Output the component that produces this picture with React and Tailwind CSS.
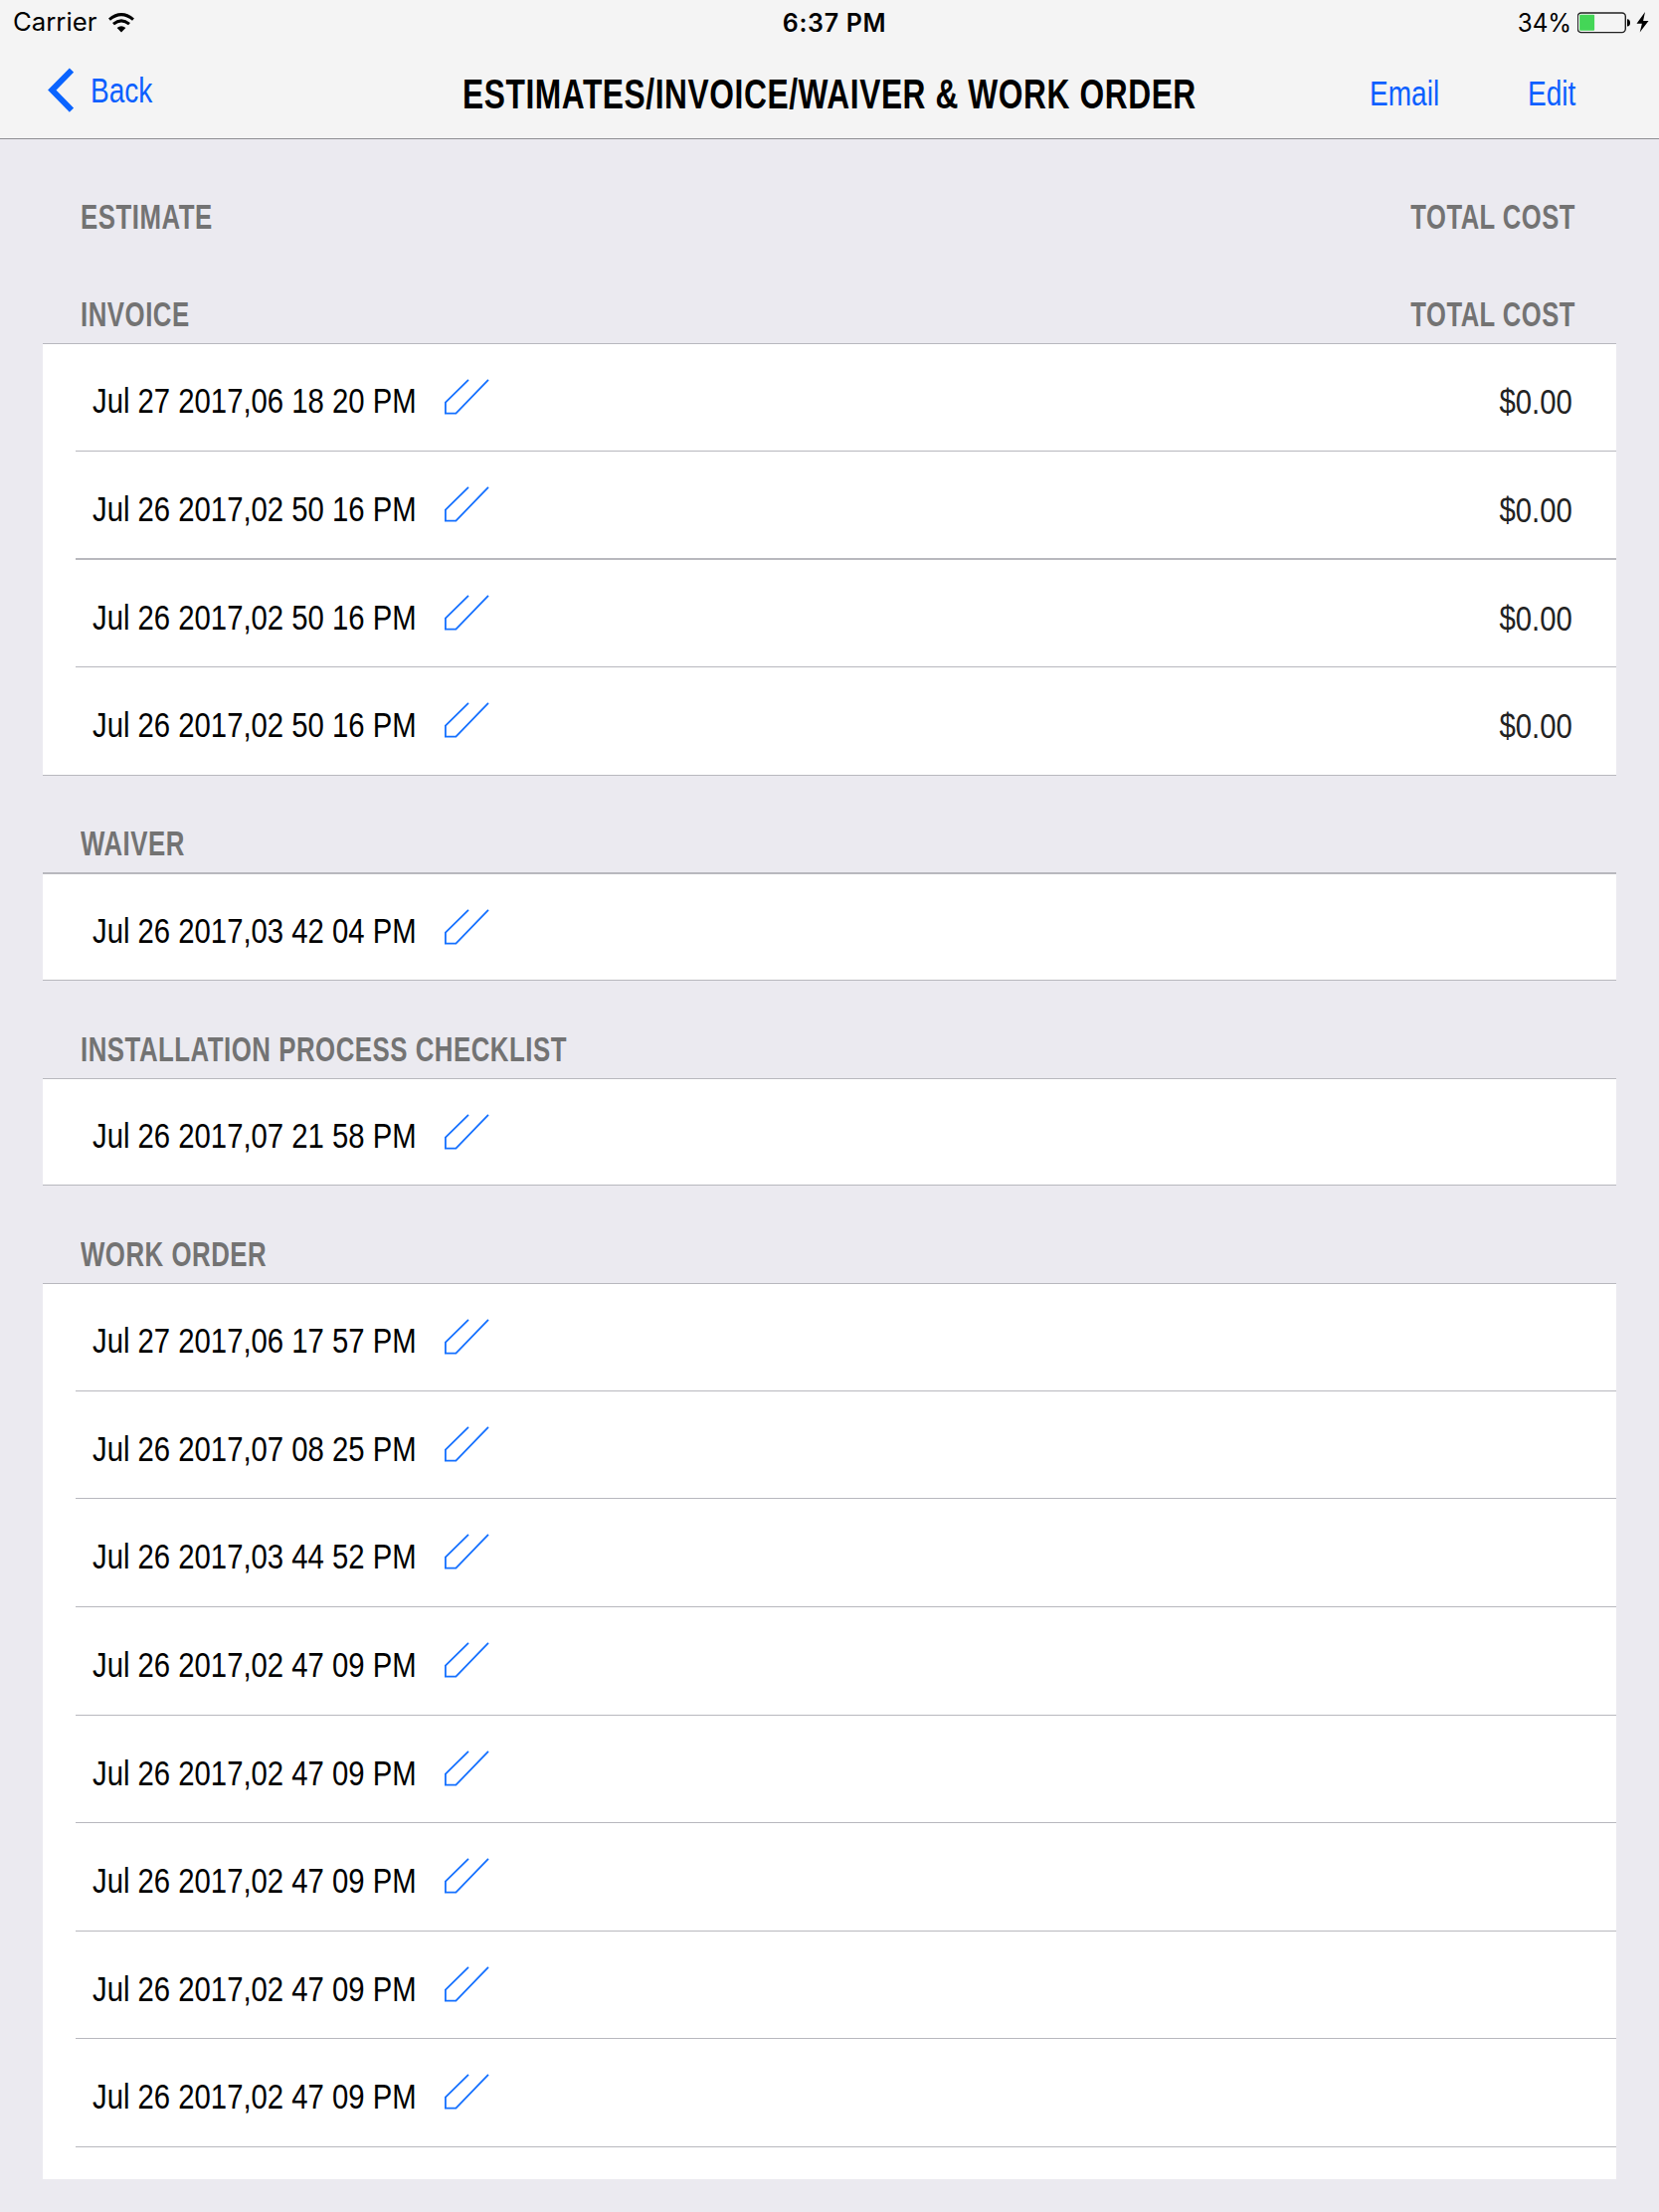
import React from "react";

const invoices = [
  { date: "Jul 27 2017,06 18 20 PM", box: "h-[108px] border-t" },
  { date: "Jul 26 2017,02 50 16 PM", box: "h-[108px] border-t" },
  { date: "Jul 26 2017,02 50 16 PM", box: "h-[109px] border-t-2" },
  { date: "Jul 26 2017,02 50 16 PM", box: "h-[109px] border-t" },
];

const workOrders = [
  { date: "Jul 27 2017,06 17 57 PM", box: "h-[108px] border-t" },
  { date: "Jul 26 2017,07 08 25 PM", box: "h-[108px] border-t" },
  { date: "Jul 26 2017,03 44 52 PM", box: "h-[109px] border-t" },
  { date: "Jul 26 2017,02 47 09 PM", box: "h-[109px] border-t" },
  { date: "Jul 26 2017,02 47 09 PM", box: "h-[108px] border-t" },
  { date: "Jul 26 2017,02 47 09 PM", box: "h-[109px] border-t" },
  { date: "Jul 26 2017,02 47 09 PM", box: "h-[108px] border-t" },
  { date: "Jul 26 2017,02 47 09 PM", box: "h-[109px] border-t" },
];

function Pencil() {
  return (
    <svg className="h-9 w-[46px] shrink-0" viewBox="0 0 46 36" fill="none" stroke="#1470ff" strokeWidth="1.8">
      <path d="M25 .8 1.9 23.6V34.7H12.4L45 .8" />
    </svg>
  );
}

function Row({ date, box, cost, first }) {
  return (
    <div className={first ? "" : "pl-[33px]"}>
      <div className={`border-[#b8b8be] ${box}`}>
        <div className={`flex pt-10 pr-[44px] ${first ? "pl-[50px]" : "pl-[17px]"}`}>
          <span className={`w-[354px] shrink-0 origin-left scale-x-[0.825] text-[35.5px] leading-9 whitespace-nowrap ${first ? "-mt-px" : ""}`}>{date}</span>
          <div className="-ml-px -mt-[5px] h-9">
            <Pencil />
          </div>
          {cost && (
            <span className={`ml-auto origin-right scale-x-[0.825] text-[35.5px] leading-9 text-[#222] ${first ? "" : "mt-px"}`}>{cost}</span>
          )}
        </div>
      </div>
    </div>
  );
}

function Heading({ title, cost, box }) {
  return (
    <div className={`flex items-end justify-between pr-[84px] pb-[11px] pl-[81px] text-[35.5px] leading-[35px] font-bold tracking-[0.7px] text-[#737373] ${box}`}>
      <h2 className="origin-left scale-x-[0.727] whitespace-nowrap">{title}</h2>
      {cost && <span className="origin-right scale-x-[0.72] whitespace-nowrap">TOTAL COST</span>}
    </div>
  );
}

function List({ rows, cost, end }) {
  return (
    <div className={`mx-[43px] bg-white ${end}`}>
      {rows.map((r, i) => (
        <Row key={i} date={r.date} box={r.box} cost={cost} first={i === 0} />
      ))}
    </div>
  );
}

function StatusBar() {
  return (
    <div className="grid h-[45px] grid-cols-3 items-center pr-2.5 pl-[13px] font-[Inter,sans-serif] text-[25px] leading-none">
      <div className="flex items-center">
        <span className="w-[96px] origin-left scale-x-[1.03]">Carrier</span>
        <svg className="h-5 w-[26px]" viewBox="0 0 26 20" fill="none" stroke="#000" strokeWidth="3">
          <path d="M1 6.6Q13-3.4 25 6.6" />
          <path d="M5 11.2Q13 4.6 21 11.2" />
          <path d="M13 19.5 8.6 15Q13 11.4 17.4 15Z" fill="#000" stroke="none" />
        </svg>
      </div>
      <div className="pt-px pl-[7px] text-center font-semibold tracking-[0.65px]">6:37 PM</div>
      <div className="flex items-center justify-end">
        <span className="origin-right scale-x-[0.97] pt-px">34%</span>
        <svg className="ml-1.5 h-[22px] w-[72px]" viewBox="0 0 72 22">
          <rect x=".3" y="1" width="48" height="19.6" rx="3.5" fill="none" stroke="#222" strokeWidth="1.4" />
          <rect x="2.1" y="2.8" width="15" height="16" rx="1" fill="#44d657" />
          <path d="M50 7.2Q53 7.5 53 11T50 14.4Z" fill="#000" />
          <path d="M68 0 59.5 11.7H64.9L62.7 20.5 71.5 9H66.1Z" fill="#000" />
        </svg>
      </div>
    </div>
  );
}

export default function App() {
  return (
    <div className="h-[2224px] w-[1668px] overflow-hidden bg-[#ebeaf0] font-['Liberation_Sans',sans-serif] text-black">
      <header className="h-[140px] border-b border-[#8e8e93] bg-[#f4f4f4]">
        <StatusBar />
        <nav className="flex h-[94px] text-[35.5px] leading-[34px] text-[#0b5fff]">
          <div className="flex w-[465px] shrink-0 pt-[23px] pl-[47px]">
            <svg className="h-[46px] w-[27px]" viewBox="0 0 27 46" fill="none" stroke="#0a64ff" strokeWidth="6">
              <path d="M25 2.5 5.3 22.6 25 42.7" />
            </svg>
            <span className="mt-1.5 ml-[17px] origin-left scale-x-[0.79]">Back</span>
          </div>
          <h1 className="w-[740px] shrink-0 pt-[29px] text-[43px] leading-[41px] font-bold tracking-[0.8px] whitespace-nowrap text-black">
            <span className="block w-[740px] origin-left scale-x-[0.737]">ESTIMATES/INVOICE/WAIVER &amp; WORK ORDER</span>
          </h1>
          <div className="flex flex-1 pt-8 pl-[172px]">
            <span className="w-[159px] shrink-0 origin-left scale-x-[0.79]">Email</span>
            <span className="origin-left scale-x-[0.79]">Edit</span>
          </div>
        </nav>
      </header>

      <main>
        <Heading title="ESTIMATE" cost box="h-[107px]" />
        <Heading title="INVOICE" cost box="h-[98px]" />
        <List rows={invoices} cost="$0.00" end="border-b border-[#b8b8be]" />
        <Heading title="WAIVER" box="h-[97px]" />
        <List rows={[{ date: "Jul 26 2017,03 42 04 PM", box: "h-[108px] border-t-2" }]} end="border-b border-[#b8b8be]" />
        <Heading title="INSTALLATION PROCESS CHECKLIST" box="h-[98px]" />
        <List rows={[{ date: "Jul 26 2017,07 21 58 PM", box: "h-[107px] border-t" }]} end="border-b border-[#b8b8be]" />
        <Heading title="WORK ORDER" box="h-[98px]" />
        <List rows={workOrders} end="" />
        <div className="mx-[43px] h-[33px] bg-white pl-[33px]">
          <div className="border-t border-[#b8b8be]" />
        </div>
      </main>
    </div>
  );
}
